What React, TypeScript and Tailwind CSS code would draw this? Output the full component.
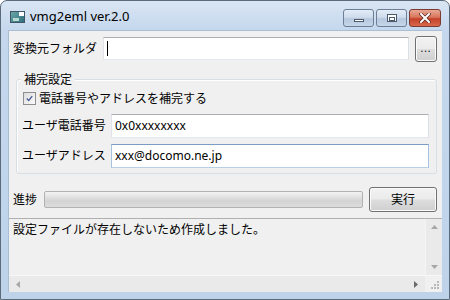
import React from "react";

const font = { fontFamily: '"Noto Sans", "Noto Sans CJK JP", sans-serif' };

function WinButton({ children, className }: { children: React.ReactNode; className: string }) {
  return (
    <div
      className={`flex items-center justify-center rounded-[3px] border border-[#707070] bg-[linear-gradient(#f2f2f2_0%,#ebebeb_48%,#dddddd_52%,#cfcfcf_100%)] shadow-[inset_0_0_0_1px_#fbfbfb] ${className}`}
    >
      {children}
    </div>
  );
}

export default function App() {
  return (
    <div
      className="w-[450px] h-[300px] overflow-hidden rounded-t-[7px] border border-[#5c6b7c] bg-[linear-gradient(#d9e5f3_0px,#c4d7ed_30px,#bed3ea_100%)] text-[12px] text-black flex flex-col"
      style={font}
    >
      {/* Title bar */}
      <div className="h-[29px] flex items-start shrink-0">
        <div className="ml-[9px] mt-[10px] w-[15px] h-[12px] border border-[#3f5566] bg-[linear-gradient(135deg,#6aa7a9,#2f6f7c)] relative">
          <div className="absolute right-0 top-0 w-[5px] h-[4px] bg-white" />
          <div className="absolute left-[2px] bottom-[1px] w-[6px] h-[3px] bg-[#b7d9d2]" />
        </div>
        <div className="ml-[5px] mt-[6px] text-[13px] leading-[18px] text-black">vmg2eml ver.2.0</div>
        <div className="ml-auto mt-[8px] mr-[8px] flex gap-[2px]">
          <div className="w-[31px] h-[18px] rounded-[3px] border border-[#6d7f96] bg-[linear-gradient(#e3ecf7_0%,#cfdcec_45%,#b6c8de_55%,#c7d7ea_100%)] flex items-center justify-center">
            <div className="w-[10px] h-[3px] mt-[5px] bg-white border border-[#4b5a6c]" />
          </div>
          <div className="w-[31px] h-[18px] rounded-[3px] border border-[#6d7f96] bg-[linear-gradient(#e3ecf7_0%,#cfdcec_45%,#b6c8de_55%,#c7d7ea_100%)] flex items-center justify-center">
            <div className="w-[10px] h-[8px] border border-[#4b5a6c] bg-white flex items-center justify-center">
              <div className="w-[6px] h-[4px] border border-[#4b5a6c] mt-[1px]" />
            </div>
          </div>
          <div className="w-[32px] h-[18px] rounded-[3px] border border-[#7d3a30] bg-[linear-gradient(#e8a793_0%,#d9765c_45%,#c5402a_55%,#d8694c_100%)] flex items-center justify-center">
            <svg width="12" height="10" viewBox="0 0 12 10">
              <path d="M2 1 L10 9 M10 1 L2 9" stroke="#5a2a20" strokeWidth="3.4" strokeLinecap="square" />
              <path d="M2 1 L10 9 M10 1 L2 9" stroke="#ffffff" strokeWidth="2" strokeLinecap="square" />
            </svg>
          </div>
        </div>
      </div>

      {/* Client area */}
      <div className="mx-[7px] mb-[7px] flex-1 bg-[#f0f0f0] flex flex-col border-l border-t border-[#a9bdd4]">
        {/* Row 1 */}
        <div className="flex items-start pt-[6px] pl-[4px] pr-[5px] h-[38px]">
          <div className="mt-[3px] w-[90px] leading-[17px]">変換元フォルダ</div>
          <div className="w-[306px] h-[23px] border border-[#abadb3] border-b-[#e3e9ef] border-l-[#e2e3ea] border-r-[#dbdfe6] bg-white flex items-center">
            <div className="ml-[3px] w-px h-[15px] bg-black" />
          </div>
          <WinButton className="ml-[6px] -mt-[1px] w-[22px] h-[26px]">
            <span className="text-[10px] leading-none tracking-[1px] -mt-[2px]">...</span>
          </WinButton>
        </div>

        {/* Group box */}
        <div className="relative ml-[7px] mr-[5px] mt-[10px] h-[95px] rounded-[3px] border border-[#d5dfe5] shadow-[inset_1px_1px_0_#ffffff]">
          <div className="absolute -top-[8px] left-[4px] px-[3px] bg-[#f0f0f0] leading-[15px]">補完設定</div>
          <div className="flex items-center mt-[11px] ml-[6px] h-[15px]">
            <div className="w-[13px] h-[13px] border border-[#8e8f8f] bg-[linear-gradient(135deg,#dcdcdc,#fbfbfb)] p-[2px] flex items-center justify-center">
              <svg width="9" height="9" viewBox="0 0 9 9">
                <path d="M1 4.5 L3.5 7 L8 1.5" stroke="#4a5f97" strokeWidth="1.8" fill="none" />
              </svg>
            </div>
            <div className="ml-[3px] leading-[15px]">電話番号やアドレスを補完する</div>
          </div>
          <div className="flex items-center mt-[8px] ml-[5px]">
            <div className="w-[89px]">ユーザ電話番号</div>
            <div className="w-[318px] h-[24px] border border-[#abadb3] border-b-[#e3e9ef] border-l-[#e2e3ea] border-r-[#dbdfe6] bg-white flex items-center pl-[3px] leading-none">
              0x0xxxxxxxx
            </div>
          </div>
          <div className="flex items-center mt-[6px] ml-[5px]">
            <div className="w-[89px]">ユーザアドレス</div>
            <div className="w-[318px] h-[24px] border border-[#7a9cc0] border-b-[#b7d0e8] border-l-[#a9c3de] border-r-[#a9c3de] bg-white flex items-center pl-[3px] leading-none">
              xxx@docomo.ne.jp
            </div>
          </div>
        </div>

        {/* Progress row */}
        <div className="flex items-center mt-[13px] pl-[4px] h-[25px]">
          <div className="w-[31px]">進捗</div>
          <div className="w-[319px] h-[17px] rounded-[2px] border border-[#b2b2b2] bg-[linear-gradient(#f3f3f3_0%,#dedede_40%,#d3d3d3_60%,#dcdcdc_100%)]" />
          <WinButton className="ml-[6px] w-[68px] h-[25px]">
            <span className="leading-none">実行</span>
          </WinButton>
        </div>

        {/* Text area */}
        <div className="mt-[6px] flex-1 border-t border-[#b0b0b0] flex flex-col">
          <div className="flex flex-1">
            <div className="flex-1 pl-[4px] pt-[3px] leading-[16px]">設定ファイルが存在しないため作成しました。</div>
            <div className="w-[17px] bg-[#eaeaea] flex flex-col items-center justify-between py-[6px] border-l border-[#f5f5f5]">
              <svg width="7" height="4" viewBox="0 0 7 4"><path d="M0 4 L3.5 0 L7 4Z" fill="#a8a8a8" /></svg>
              <svg width="7" height="4" viewBox="0 0 7 4"><path d="M0 0 L3.5 4 L7 0Z" fill="#a8a8a8" /></svg>
            </div>
          </div>
          <div className="flex h-[17px] border-t border-[#f7f7f7]">
            <div className="flex-1 bg-[#eaeaea] flex items-center justify-between px-[7px]">
              <svg width="4" height="7" viewBox="0 0 4 7"><path d="M4 0 L0 3.5 L4 7Z" fill="#a8a8a8" /></svg>
              <svg width="4" height="7" viewBox="0 0 4 7"><path d="M0 0 L4 3.5 L0 7Z" fill="#6a6a6a" /></svg>
            </div>
            <div className="w-[17px] bg-[#f0f0f0] flex items-end justify-end p-[2px]">
              <svg width="10" height="10" viewBox="0 0 10 10">
                {[
                  [7, 1], [7, 4], [4, 4], [7, 7], [4, 7], [1, 7],
                ].map(([x, y], i) => (
                  <rect key={i} x={x} y={y} width="2" height="2" fill="#b8b8b8" />
                ))}
              </svg>
            </div>
          </div>
        </div>
      </div>
    </div>
  );
}
